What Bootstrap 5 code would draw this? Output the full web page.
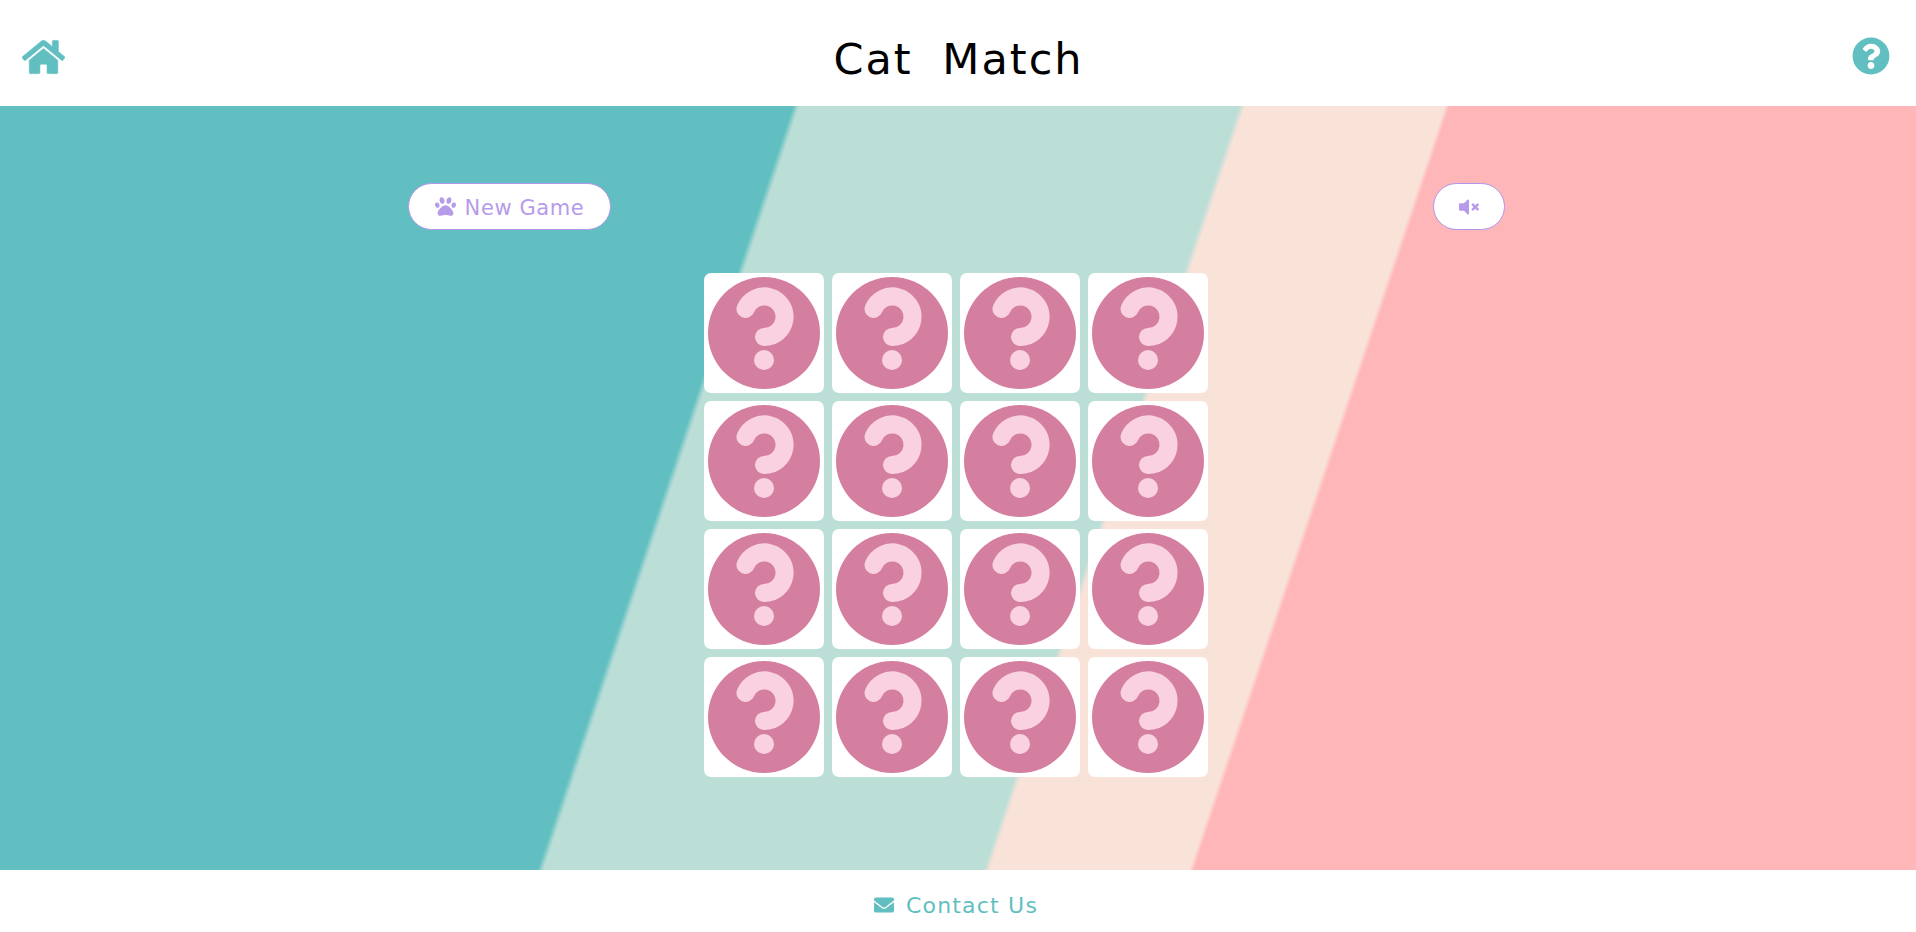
<!DOCTYPE html>
<html lang="en">
<head>
  <meta charset="UTF-8" />
  <meta name="viewport" content="width=device-width, initial-scale=1" />
  <title>Cat Match</title>
  <link href="https://cdn.jsdelivr.net/npm/bootstrap@5.3.2/dist/css/bootstrap.min.css" rel="stylesheet" />
  <style>
    body {
      font-family: "DejaVu Sans", sans-serif;
      background: #fff;
    }
    .top-bar {
      height: 106px;
      padding: 38px 26px 0 22px;
    }
    .home-icon { width: 43px; height: 38px; fill: #61bfc1; display: block; stroke: #61bfc1; stroke-width: 8px; }
    .help-icon { width: 38px; height: 38px; fill: #61bfc1; display: block; margin-top: -1px; }
    .game-title {
      font-size: 43px;
      line-height: 1;
      font-weight: 400;
      color: #000;
      letter-spacing: 2px;
      word-spacing: 14px;
      margin: 0;
    }
    .game-area {
      height: 764px;
      padding-top: 77px;
      background: linear-gradient(108.5deg, #61bfc1 752px, #bbded6 758px, #bbded6 1175px, #f9e3d9 1181px, #f9e3d9 1370px, #ffb6b9 1375px);
    }
    .btn-row {
      padding: 0 411px 0 408px;
      margin-bottom: 43px;
    }
    .cat-btn {
      height: 47px;
      background: #fff;
      border: 1px solid #b096ea;
      border-radius: 24px;
      color: #b69bea;
      font-size: 21px;
      padding: 0;
    }
    .cat-btn:hover { background: #fff; color: #b69bea; border-color: #b096ea; }
    .btn-new { width: 203px; gap: 9px; letter-spacing: .6px; }
    .btn-new span { padding-top: 4px; }
    .btn-sound { width: 72px; }
    .paw-icon { width: 21px; height: 21px; fill: #b69bea; }
    .mute-icon { width: 20px; height: 20px; fill: #b69bea; }
    .card-grid {
      grid-template-columns: repeat(4, 120px);
      gap: 8px;
      width: 504px;
      margin-left: 704px;
    }
    .memory-tile {
      width: 120px;
      height: 120px;
      background: #fff;
      border-radius: 7px;
    }
    .memory-tile svg { display: block; width: 120px; height: 120px; }
    .bottom-bar {
      height: 62px;
      color: #61bfc1;
      font-size: 22px;
      letter-spacing: 1.2px;
      gap: 12px;
      padding: 8px 4px 0 0;
    }
    .mail-icon { width: 20px; height: 20px; fill: #61bfc1; }
  </style>
</head>
<body>
  <svg width="0" height="0" class="position-absolute">
    <symbol id="tileBack" viewBox="0 0 120 120">
      <circle cx="60" cy="60" r="56" fill="#d57fa0" />
      <path d="M41.5 36A20.3 20.3 0 1 1 60 64" fill="none" stroke="#fad1e1" stroke-width="18" stroke-linecap="round" />
      <circle cx="60" cy="87" r="10" fill="#fad1e1" />
    </symbol>
  </svg>

  <header class="top-bar d-flex justify-content-between align-items-start">
    <svg class="home-icon" viewBox="0 0 576 512"><path d="M280.37 148.26L96 300.11V464a16 16 0 0 0 16 16l112.06-.29a16 16 0 0 0 15.92-16V368a16 16 0 0 1 16-16h64a16 16 0 0 1 16 16v95.64a16 16 0 0 0 16 16.05L464 480a16 16 0 0 0 16-16V300L295.67 148.26a12.19 12.19 0 0 0-15.3 0zM571.6 251.47L488 182.56V44.05a12 12 0 0 0-12-12h-56a12 12 0 0 0-12 12v72.61L318.47 43a48 48 0 0 0-61 0L4.34 251.47a12 12 0 0 0-1.6 16.9l25.5 31A12 12 0 0 0 45.15 301l235.22-193.74a12.19 12.19 0 0 1 15.3 0L530.9 301a12 12 0 0 0 16.9-1.6l25.5-31a12 12 0 0 0-1.7-16.93z"/></svg>
    <h1 class="game-title">Cat Match</h1>
    <svg class="help-icon" viewBox="0 0 512 512"><path d="M504 256c0 136.997-111.043 248-248 248S8 392.997 8 256C8 119.083 119.043 8 256 8s248 111.083 248 248zM262.655 90c-54.497 0-89.255 22.957-116.549 63.758-3.536 5.286-2.353 12.415 2.715 16.258l34.699 26.31c5.205 3.947 12.621 3.008 16.665-2.122 17.864-22.658 30.113-35.797 57.303-35.797 20.429 0 45.698 13.148 45.698 32.958 0 14.976-12.363 22.667-32.534 33.976C247.128 238.528 216 254.941 216 296v4c0 6.627 5.373 12 12 12h56c6.627 0 12-5.373 12-12v-1.333c0-28.462 83.186-29.647 83.186-106.667 0-58.002-60.165-102-116.531-102zM256 338c-25.365 0-46 20.635-46 46 0 25.364 20.635 46 46 46s46-20.636 46-46c0-25.365-20.635-46-46-46z"/></svg>
  </header>

  <main class="game-area">
    <div class="btn-row d-flex justify-content-between">
      <button type="button" class="btn cat-btn btn-new d-flex align-items-center justify-content-center">
        <svg class="paw-icon" viewBox="0 0 512 512"><path d="M256 224c-79.41 0-192 122.76-192 200.25 0 34.9 26.81 55.75 71.74 55.75 48.84 0 81.09-25.08 120.26-25.08 39.51 0 71.85 25.08 120.26 25.08 44.93 0 71.74-20.85 71.74-55.75C448 346.76 335.41 224 256 224zm-147.28-12.61c-10.4-34.65-42.44-57.09-71.56-50.13-29.12 6.96-44.29 40.69-33.89 75.34 10.4 34.65 42.44 57.09 71.56 50.13 29.12-6.96 44.29-40.69 33.89-75.34zm84.72-20.78c30.94-8.14 46.42-49.94 34.58-93.36s-46.52-72.01-77.46-63.87-46.42 49.94-34.58 93.36c11.84 43.42 46.52 72.01 77.46 63.87zm281.39-29.34c-29.12-6.96-61.15 15.48-71.56 50.13-10.4 34.65 4.77 68.38 33.89 75.34 29.12 6.96 61.15-15.48 71.56-50.13 10.4-34.65-4.77-68.38-33.89-75.34zm-156.27 29.34c30.94 8.14 65.62-20.45 77.46-63.87 11.84-43.42-3.64-85.21-34.58-93.36s-65.62 20.45-77.46 63.87c-11.84 43.42 3.64 85.22 34.58 93.36z"/></svg>
        <span>New Game</span>
      </button>
      <button type="button" class="btn cat-btn btn-sound d-flex align-items-center justify-content-center" aria-label="Sound off">
        <svg class="mute-icon" viewBox="0 0 512 512"><path d="M215.03 71.05L126.06 160H24c-13.26 0-24 10.74-24 24v144c0 13.25 10.74 24 24 24h102.06l88.97 88.95c15.03 15.03 40.97 4.47 40.97-16.97V88.02c0-21.46-25.96-32-40.97-16.97zM461.64 256l45.64-45.64c6.3-6.3 6.3-16.52 0-22.82l-22.82-22.82c-6.3-6.3-16.52-6.3-22.82 0L416 210.36l-45.64-45.64c-6.3-6.3-16.52-6.3-22.82 0l-22.82 22.82c-6.3 6.3-6.3 16.52 0 22.82L370.36 256l-45.63 45.63c-6.3 6.3-6.3 16.52 0 22.82l22.82 22.82c6.3 6.3 16.52 6.3 22.82 0L416 301.64l45.64 45.64c6.3 6.3 16.52 6.3 22.82 0l22.82-22.82c6.3-6.3 6.3-16.52 0-22.82L461.64 256z"/></svg>
      </button>
    </div>
    <div class="card-grid d-grid" id="tablero"></div>
  </main>

  <footer class="bottom-bar d-flex align-items-center justify-content-center">
    <svg class="mail-icon" viewBox="0 0 512 512"><path d="M502.3 190.8c3.9-3.1 9.7-.2 9.7 4.7V400c0 26.5-21.5 48-48 48H48c-26.5 0-48-21.5-48-48V195.6c0-5 5.7-7.8 9.7-4.7 22.4 17.4 52.1 39.5 154.1 113.6 21.1 15.4 56.7 47.8 92.2 47.6 35.7.3 72-32.8 92.3-47.6 102-74.1 131.6-96.3 154-113.7zM256 320c23.2.4 56.6-29.2 73.4-41.4 132.7-96.3 142.8-104.7 173.4-128.7 5.8-4.5 9.2-11.5 9.2-18.9v-19c0-26.5-21.5-48-48-48H48C21.5 64 0 85.5 0 112v19c0 7.4 3.4 14.3 9.2 18.9 30.6 23.9 40.7 32.4 173.4 128.7 16.8 12.2 50.2 41.8 73.4 41.4z"/></svg>
    <span>Contact Us</span>
  </footer>

  <script src="https://cdn.jsdelivr.net/npm/bootstrap@5.3.2/dist/js/bootstrap.bundle.min.js"></script>
  <script>
    const tablero = document.getElementById('tablero');
    for (let i = 0; i < 16; i++) {
      tablero.innerHTML += '<div class="memory-tile"><svg><use href="#tileBack" /></svg></div>';
    }
  </script>
</body>
</html>
